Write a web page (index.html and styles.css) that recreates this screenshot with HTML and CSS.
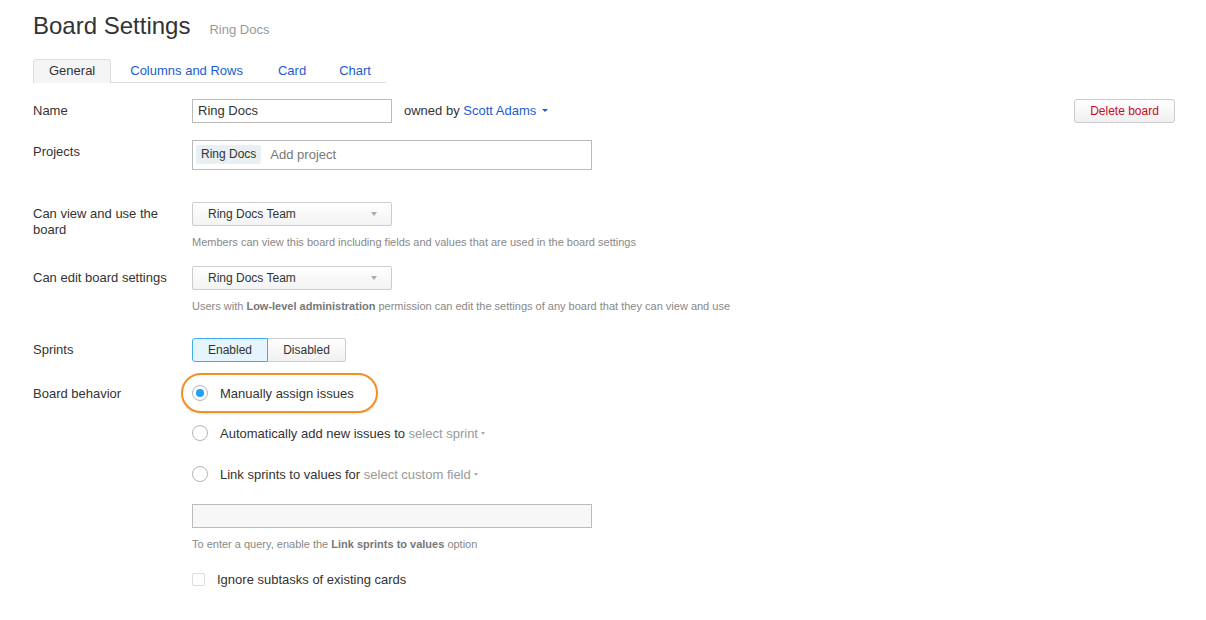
FILE: index.html
```html
<!DOCTYPE html>
<html>
<head>
<meta charset="utf-8">
<link rel="stylesheet" href="styles.css">
</head>
<body>
<div class="page">
  <div class="header">
    <h1 class="title">Board Settings</h1>
    <span class="subtitle">Ring Docs</span>
  </div>
  <div class="tabs">
    <span class="tab active">General</span>
    <span class="tab">Columns and Rows</span>
    <span class="tab">Card</span>
    <span class="tab">Chart</span>
  </div>

  <div class="row row-name">
    <div class="label">Name</div>
    <div class="control control-name">
      <div class="input input-name">Ring Docs</div>
      <span class="owner">owned by <span class="link">Scott Adams</span><span class="caret blue"></span></span>
      <span class="spacer"></span>
      <button class="btn btn-delete">Delete board</button>
    </div>
  </div>

  <div class="row row-projects">
    <div class="label">Projects</div>
    <div class="control">
      <div class="input input-projects"><span class="tag">Ring Docs</span><span class="placeholder">Add project</span></div>
    </div>
  </div>

  <div class="row row-view">
    <div class="label label-multi">Can view and use the board</div>
    <div class="control">
      <div class="select"><span>Ring Docs Team</span><span class="caret gray"></span></div>
      <div class="hint">Members can view this board including fields and values that are used in the board settings</div>
    </div>
  </div>

  <div class="row row-edit">
    <div class="label">Can edit board settings</div>
    <div class="control">
      <div class="select"><span>Ring Docs Team</span><span class="caret gray"></span></div>
      <div class="hint">Users with <b>Low-level administration</b> permission can edit the settings of any board that they can view and use</div>
    </div>
  </div>

  <div class="row row-sprints">
    <div class="label">Sprints</div>
    <div class="control">
      <div class="btn-group">
        <span class="seg seg-on">Enabled</span><span class="seg">Disabled</span>
      </div>
    </div>
  </div>

  <div class="row row-behavior">
    <div class="label">Board behavior</div>
    <div class="control">
      <div class="radio-item highlighted">
        <span class="radio checked"></span>
        <span>Manually assign issues</span>
        <span class="ellipse"></span>
      </div>
      <div class="radio-item">
        <span class="radio"></span>
        <span>Automatically add new issues to <span class="muted">select sprint</span><span class="caret small"></span></span>
      </div>
      <div class="radio-item radio-last">
        <span class="radio"></span>
        <span>Link sprints to values for <span class="muted">select custom field</span><span class="caret small"></span></span>
      </div>
      <div class="input input-query"></div>
      <div class="hint">To enter a query, enable the <b>Link sprints to values</b> option</div>
      <div class="check-item">
        <span class="checkbox"></span>
        <span>Ignore subtasks of existing cards</span>
      </div>
    </div>
  </div>
</div>
</body>
</html>
```

FILE: styles.css
```css
html, body {
  margin: 0;
  padding: 0;
  background: #fff;
}
body {
  font-family: "Liberation Sans", Arial, sans-serif;
  font-size: 13px;
  color: #333;
}
.page {
  padding: 12px 31px 0 33px;
}
.header {
  display: flex;
  align-items: baseline;
  height: 28px;
}
.title {
  margin: 0;
  font-size: 24px;
  font-weight: normal;
  line-height: 28px;
  color: #333;
}
.subtitle {
  margin-left: 19px;
  color: #999;
  font-size: 13px;
}
.tabs {
  display: inline-flex;
  margin-top: 19px;
  border-bottom: 1px solid #ddd;
  height: 23px;
}
.tab {
  padding: 0 15px;
  margin-right: 3px;
  line-height: 21px;
  color: #1c5ccf;
  border: 1px solid transparent;
  border-bottom: none;
  border-radius: 3px 3px 0 0;
}
.tab:nth-child(3) { margin-right: 1px; }
.tab:last-child { margin-right: 0; padding-right: 14px; }
.tab.active {
  color: #333;
  background: #f5f5f5;
  border-color: #ddd;
  height: 23px;
  margin-bottom: -1px;
  padding: 0 15px;
  line-height: 21px;
}
.row {
  display: grid;
  grid-template-columns: 159px 1fr;
}
.label {
  line-height: 24px;
}
.label-multi {
  line-height: 16px;
  padding-top: 4px;
  width: 140px;
}
.row-name { margin-top: 16px; }
.row-projects { margin-top: 17px; }
.row-view { margin-top: 32px; }
.row-edit { margin-top: 16px; }
.row-sprints { margin-top: 24px; }
.row-behavior { margin-top: 19px; }
.row-behavior > .label { line-height: 26px; }

.control-name {
  display: flex;
  align-items: center;
}
.spacer { flex: 1; }
.input {
  box-sizing: border-box;
  border: 1px solid #bbb;
  background: #fff;
}
.input-name {
  width: 200px;
  height: 24px;
  line-height: 21px;
  padding: 0 5px;
}
.owner {
  margin-left: 12px;
  line-height: 23px;
  align-self: flex-start;
}
.link { color: #1c5ccf; }
.caret {
  display: inline-block;
  width: 0;
  height: 0;
  border-left: 3px solid transparent;
  border-right: 3px solid transparent;
  border-top: 3px solid #999;
  vertical-align: middle;
}
.caret.blue {
  border-top-color: #1c5ccf;
  margin-left: 6px;
  margin-bottom: 2px;
}
.caret.small {
  border-left-width: 2.5px;
  border-right-width: 2.5px;
  border-top-width: 3px;
  border-top-color: #aaa;
  margin-left: 3px;
  margin-bottom: 2px;
}
.btn {
  font-family: inherit;
  font-size: 12px;
  box-sizing: border-box;
  height: 24px;
  padding: 0 15px;
  border: 1px solid #ccc;
  border-radius: 3px;
  background: linear-gradient(#fff, #f0f0f0);
}
.btn-delete {
  color: #cc0a1e;
  width: 101px;
  padding: 0;
}
.input-projects {
  width: 400px;
  height: 30px;
  display: flex;
  align-items: center;
  padding: 0 3px 2px;
}
.tag {
  background: #e8f0f4;
  border-radius: 2px;
  padding: 0 5px;
  height: 19px;
  line-height: 19px;
  font-size: 12px;
}
.placeholder {
  color: #777;
  margin-left: 9px;
}
.select {
  box-sizing: border-box;
  width: 200px;
  height: 24px;
  border: 1px solid #ccc;
  border-radius: 2px;
  background: linear-gradient(#fff, #f3f3f3);
  display: flex;
  align-items: center;
  justify-content: space-between;
  padding: 0 14px 0 15px;
  font-size: 12px;
}
.select .caret.gray {
  border-left-width: 3px;
  border-right-width: 3px;
  border-top-width: 4px;
  border-top-color: #aaa;
}
.hint {
  margin-top: 8px;
  font-size: 11px;
  line-height: 16px;
  color: #888;
}
.hint b { color: #777; }
.btn-group {
  display: inline-flex;
  height: 24px;
  box-sizing: border-box;
  font-size: 12px;
}
.seg {
  box-sizing: border-box;
  height: 24px;
  line-height: 22px;
  border: 1px solid #ccc;
  background: linear-gradient(#fff, #f0f0f0);
  padding: 0 14px;
}
.seg:last-child {
  border-left: none;
  border-radius: 0 3px 3px 0;
  width: 78px;
  text-align: center;
  padding: 0;
}
.seg-on {
  border-color: #3aaeef;
  background: #e6f5fd;
  border-radius: 3px 0 0 3px;
  width: 76px;
  text-align: center;
  padding: 0;
}
.radio-item {
  position: relative;
  display: flex;
  align-items: center;
  height: 24px;
  margin-bottom: 16px;
}
.radio-item.radio-last { margin-top: 17px; margin-bottom: 18px; }
.radio {
  box-sizing: border-box;
  width: 16px;
  height: 16px;
  border: 1px solid #b5b5b5;
  border-radius: 50%;
  background: #fff;
  margin-right: 12px;
  display: flex;
  align-items: center;
  justify-content: center;
}
.radio.checked::after {
  content: "";
  width: 8px;
  height: 8px;
  border-radius: 50%;
  background: #1ea2f7;
}
.muted { color: #999; }
.ellipse {
  position: absolute;
  left: -11px;
  top: -8px;
  width: 197px;
  height: 40px;
  box-sizing: border-box;
  border: 2px solid #f39021;
  border-radius: 20px;
  box-shadow: 0 1px 2px rgba(0,0,0,0.12);
}
.input-query {
  width: 400px;
  height: 24px;
  background: #f7f7f7;
}
.check-item {
  display: flex;
  align-items: center;
  height: 24px;
  margin-top: 15px;
}
.checkbox {
  box-sizing: border-box;
  width: 13px;
  height: 13px;
  border: 1px solid #ddd;
  border-radius: 2px;
  margin-right: 12px;
}
```
